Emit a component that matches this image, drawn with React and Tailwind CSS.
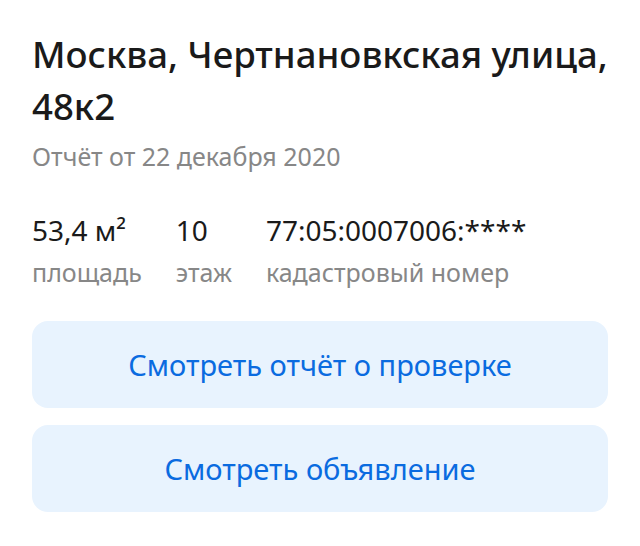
export default function App() {
  return (
    <div className="w-[640px] h-[546px] bg-white px-8 pt-[28px]" style={{ fontFamily: '"Noto Sans", sans-serif' }}>
      <h1 className="whitespace-nowrap text-[36.6px] leading-[52px] font-medium text-[#1a1a1a]">
        Москва, Чертнановкская улица,
        <br />
        48к2
      </h1>
      <div className="mt-[8px] text-[25px] leading-[32px] text-[#878787]">Отчёт от 22 декабря 2020</div>
      <div className="mt-[40px] flex gap-[34px]">
        <div className="flex flex-col">
          <span className="text-[28px] leading-[36px] text-[#1a1a1a]">53,4 м²</span>
          <span className="mt-[8px] text-[25px] leading-[32px] text-[#878787]">площадь</span>
        </div>
        <div className="flex flex-col">
          <span className="text-[28px] leading-[36px] text-[#1a1a1a]">10</span>
          <span className="mt-[8px] text-[25px] leading-[32px] text-[#878787]">этаж</span>
        </div>
        <div className="flex flex-col">
          <span className="text-[28px] leading-[36px] text-[#1a1a1a]">77:05:0007006:****</span>
          <span className="mt-[8px] text-[25px] leading-[32px] text-[#878787]">кадастровый номер</span>
        </div>
      </div>
      <div className="mt-[33px] flex flex-col gap-[17px]">
        <button className="h-[87px] w-full rounded-2xl bg-[#e8f3fe] text-[29px] text-[#0a6be0]">
          Смотреть отчёт о проверке
        </button>
        <button className="h-[87px] w-full rounded-2xl bg-[#e8f3fe] text-[29px] text-[#0a6be0]">
          Смотреть объявление
        </button>
      </div>
    </div>
  );
}
